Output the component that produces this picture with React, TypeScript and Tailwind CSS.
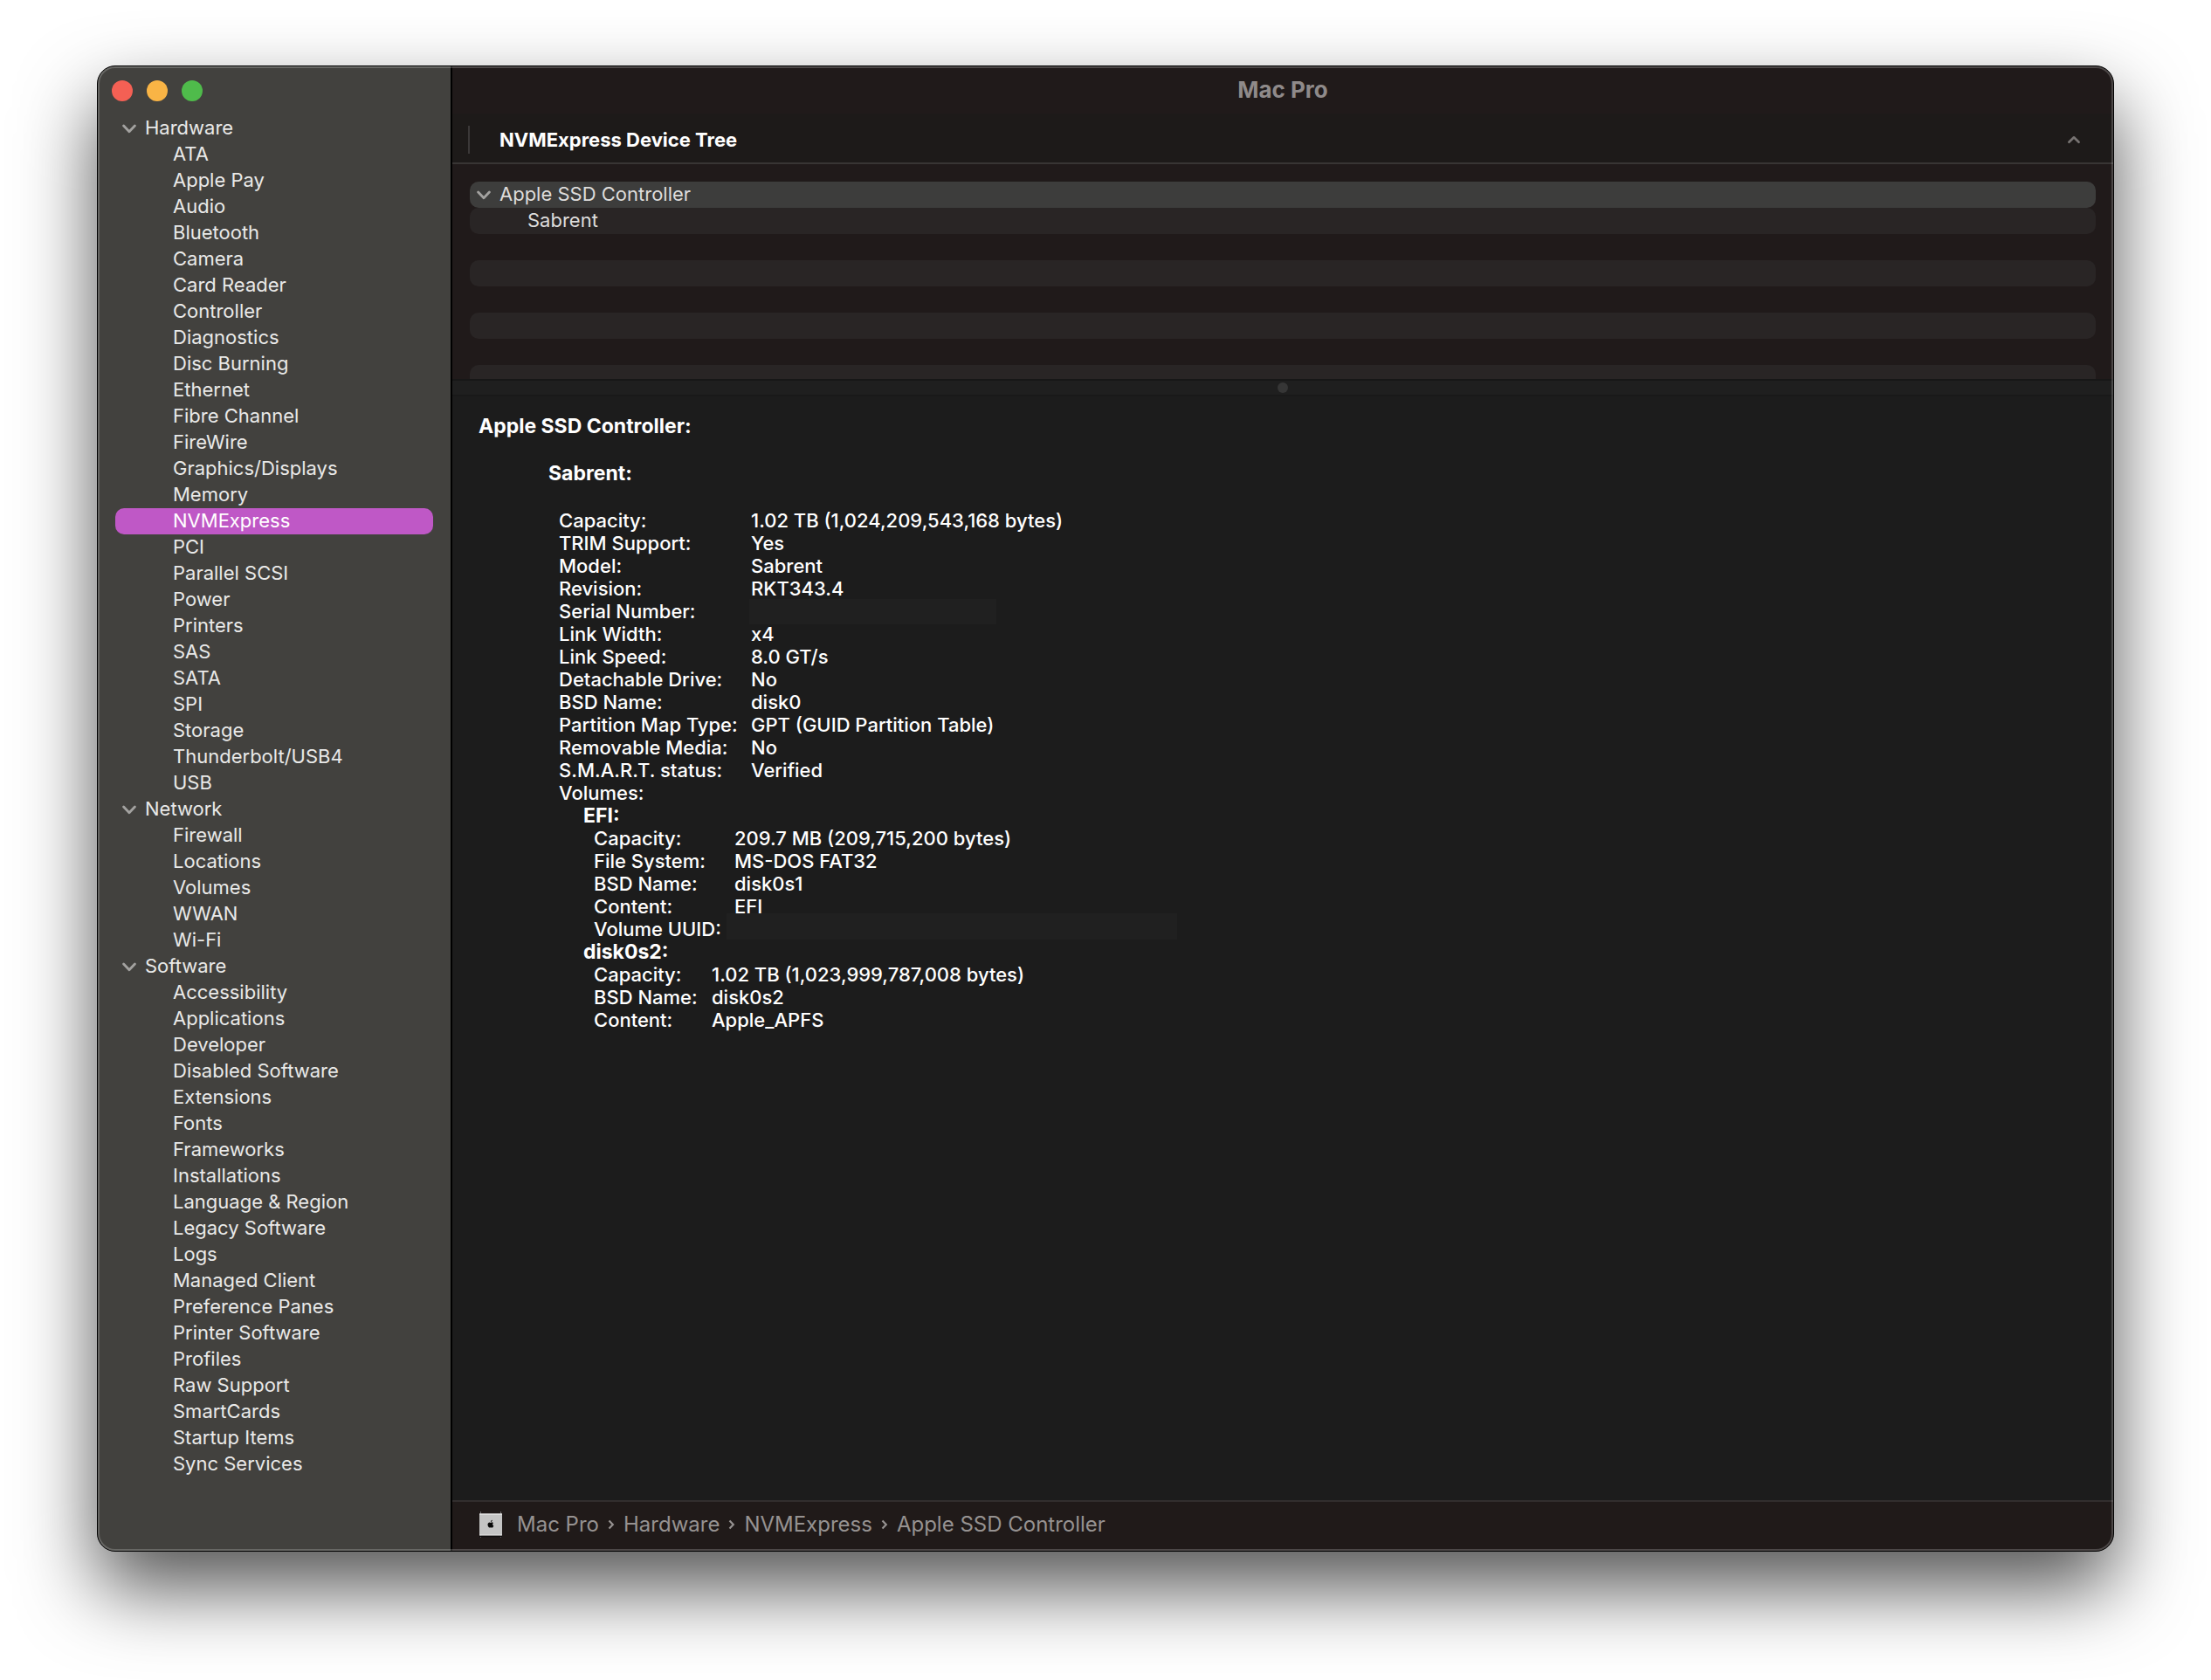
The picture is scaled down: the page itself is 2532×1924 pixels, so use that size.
import { useState } from "react";

type Group = { name: string; items: string[] };
type Field = { label: string; value?: string; mask?: string };

const groups: Group[] = [
  {
    name: "Hardware",
    items: [
      "ATA", "Apple Pay", "Audio", "Bluetooth", "Camera", "Card Reader", "Controller",
      "Diagnostics", "Disc Burning", "Ethernet", "Fibre Channel", "FireWire",
      "Graphics/Displays", "Memory", "NVMExpress", "PCI", "Parallel SCSI", "Power",
      "Printers", "SAS", "SATA", "SPI", "Storage", "Thunderbolt/USB4", "USB",
    ],
  },
  { name: "Network", items: ["Firewall", "Locations", "Volumes", "WWAN", "Wi-Fi"] },
  {
    name: "Software",
    items: [
      "Accessibility", "Applications", "Developer", "Disabled Software", "Extensions",
      "Fonts", "Frameworks", "Installations", "Language & Region", "Legacy Software",
      "Logs", "Managed Client", "Preference Panes", "Printer Software", "Profiles",
      "Raw Support", "SmartCards", "Startup Items", "Sync Services",
    ],
  },
];

const driveFields: Field[] = [
  { label: "Capacity:", value: "1.02 TB (1,024,209,543,168 bytes)" },
  { label: "TRIM Support:", value: "Yes" },
  { label: "Model:", value: "Sabrent" },
  { label: "Revision:", value: "RKT343.4" },
  { label: "Serial Number:", mask: "-left-0.5 -top-px h-[29px] w-[283px]" },
  { label: "Link Width:", value: "x4" },
  { label: "Link Speed:", value: "8.0 GT/s" },
  { label: "Detachable Drive:", value: "No" },
  { label: "BSD Name:", value: "disk0" },
  { label: "Partition Map Type:", value: "GPT (GUID Partition Table)" },
  { label: "Removable Media:", value: "No" },
  { label: "S.M.A.R.T. status:", value: "Verified" },
  { label: "Volumes:" },
];

const efiFields: Field[] = [
  { label: "Capacity:", value: "209.7 MB (209,715,200 bytes)" },
  { label: "File System:", value: "MS-DOS FAT32" },
  { label: "BSD Name:", value: "disk0s1" },
  { label: "Content:", value: "EFI" },
  { label: "Volume UUID:", mask: "-left-[9px] -top-[5px] h-[30px] w-[516px]" },
];

const diskFields: Field[] = [
  { label: "Capacity:", value: "1.02 TB (1,023,999,787,008 bytes)" },
  { label: "BSD Name:", value: "disk0s2" },
  { label: "Content:", value: "Apple_APFS" },
];

const crumbs = ["Mac Pro", "Hardware", "NVMExpress", "Apple SSD Controller"];

function Chevron() {
  return (
    <svg className="h-3 w-4 shrink-0" viewBox="0 0 16 12" fill="none" stroke="#a3a2a0" strokeWidth="2.8" strokeLinecap="round" strokeLinejoin="round" aria-hidden="true">
      <path d="M1.600 3 8 9.800l6.400-6.800" />
    </svg>
  );
}

function Fields({ rows, column }: { rows: Field[]; column: string }) {
  return (
    <table className="border-collapse font-medium whitespace-nowrap">
      <tbody>
        {rows.map((row) => (
          <tr key={row.label} className="h-[26px]">
            <th scope="row" className={`${column} p-0 text-left font-medium`}>{row.label}</th>
            <td className="relative p-0">
              {row.value}
              {row.mask && <span className={`absolute bg-[#202020] ${row.mask}`} />}
            </td>
          </tr>
        ))}
      </tbody>
    </table>
  );
}

function Sidebar() {
  const [selected, setSelected] = useState("NVMExpress");
  const [closed, setClosed] = useState<string[]>([]);
  const toggle = (name: string) =>
    setClosed(closed.includes(name) ? closed.filter((n) => n !== name) : [...closed, name]);

  return (
    <aside className="w-[406px] shrink-0 border-r-2 border-black bg-[#42413e]">
      <div className="flex h-14 items-start gap-4 pt-4 pl-4">
        <button aria-label="Close" className="size-6 rounded-full bg-[#f46054]" />
        <button aria-label="Minimize" className="size-6 rounded-full bg-[#f9b445]" />
        <button aria-label="Zoom" className="size-6 rounded-full bg-[#4fbb4b]" />
      </div>
      <nav className="px-5 text-[#e9e9e8]">
        {groups.map((group) => (
          <section key={group.name}>
            <button
              onClick={() => toggle(group.name)}
              aria-expanded={!closed.includes(group.name)}
              className="flex h-[30px] w-full items-center gap-2.5 pl-2"
            >
              <Chevron />
              <span className="pb-0.5">{group.name}</span>
            </button>
            {!closed.includes(group.name) && (
              <ul>
                {group.items.map((item) => (
                  <li key={item}>
                    <button
                      onClick={() => setSelected(item)}
                      className={`flex h-[30px] w-full items-center rounded-[10px] pb-0.5 pl-[66px] ${selected === item ? "bg-[#bf58c6] text-white" : ""}`}
                    >
                      {item}
                    </button>
                  </li>
                ))}
              </ul>
            )}
          </section>
        ))}
      </nav>
    </aside>
  );
}

function DeviceTree() {
  return (
    <section className="shrink-0">
      <div className="flex h-[58px] items-center border-b-2 border-[#383534] bg-[#1d1a19] pt-1 pr-[37px] pl-[18px]">
        <span className="h-8 w-0.5 bg-[#3b3838]" />
        <button className="flex flex-1 items-center justify-between pl-[34px] font-bold text-white">
          NVMExpress Device Tree
          <svg className="h-[10px] w-4" viewBox="0 0 16 10" fill="none" stroke="#777372" strokeWidth="2.600" strokeLinecap="round" strokeLinejoin="round" aria-hidden="true">
            <path d="M2.400 7.800 8 2.300l5.600 5.500" />
          </svg>
        </button>
      </div>
      <div role="tree" aria-label="NVMExpress Device Tree" className="h-[246px] overflow-hidden px-5 pt-5 text-[#dddcdb]">
        <button role="treeitem" aria-expanded="true" className="flex h-[30px] w-full items-center gap-2.5 rounded-[10px] bg-[#3d3d3c] pl-2">
          <Chevron />
          <span className="pb-0.5">Apple SSD Controller</span>
        </button>
        <button role="treeitem" className="flex h-[30px] w-full items-center rounded-[10px] bg-[#292525] pb-0.5 pl-[66px]">
          Sabrent
        </button>
        <div className="mt-[30px] h-[30px] rounded-[10px] bg-[#292525]" />
        <div className="mt-[30px] h-[30px] rounded-[10px] bg-[#292525]" />
        <div className="mt-[30px] h-[30px] rounded-[10px] bg-[#292525]" />
      </div>
    </section>
  );
}

function MacProIcon() {
  return (
    <svg className="h-8 w-[26px] shrink-0" viewBox="0 0 26 32" aria-hidden="true">
      <path d="M1.500 1v30M24.500 1v30" stroke="#6b6969" strokeWidth="1" />
      <rect x="0" y="3.500" width="26" height="25" fill="#c4c4c4" />
      <path d="M0 4.200h26M0 28h26" stroke="#e6e6e6" strokeWidth="1.200" />
      <path d="M0 29.500h26" stroke="#0b0b0b" strokeWidth="1.400" />
      <path d="M13 13.900c.6-.4 1.100-.6 1.700-.5.6.1 1 .3 1.300.7-1.300 1-1 2.700.3 3.300-.4 1.200-1.100 2.100-1.800 2.100-.6 0-.8-.3-1.500-.3s-.9.3-1.500.3c-1-.1-2.100-2-2-3.700.1-1.500 1-2.400 2.100-2.400.6 0 1 .3 1.400.5Zm-.1-.8c0-1.200.8-2.200 1.900-2.300.1 1.200-.8 2.200-1.900 2.300Z" fill="#080808" />
    </svg>
  );
}

function PathBar() {
  return (
    <footer className="flex h-[58px] shrink-0 items-center border-t-2 border-[#322e2e] bg-[#201a19] pb-1 pl-[31px] text-2xl text-[#969291]">
      <MacProIcon />
      <ol className="flex items-center pl-[17px]">
        {crumbs.map((crumb, i) => (
          <li key={crumb} className="flex items-center">
            {i > 0 && (
              <svg className="mx-2.5 h-3 w-2" viewBox="0 0 8 12" fill="none" stroke="#969291" strokeWidth="2.200" aria-hidden="true">
                <path d="M1.500 1.500 5.800 6l-4.300 4.500" />
              </svg>
            )}
            <button>{crumb}</button>
          </li>
        ))}
      </ol>
    </footer>
  );
}

export default function App() {
  return (
    <div className="flex min-h-screen bg-white px-[111px] pt-[75px] pb-[147px] font-[Inter,sans-serif] text-[22px] leading-[26px]">
      <main className="relative flex min-w-0 flex-1 overflow-hidden rounded-[21px] border border-black bg-[#1c1c1c] shadow-[0_42px_88px_rgba(0,0,0,0.67)]">
        <Sidebar />
        <div className="flex min-w-0 flex-1 flex-col bg-[#201a1a]">
          <header className="flex h-[54px] shrink-0 items-center justify-center">
            <h1 className="text-[26px] font-bold text-[#8f8a8a]">Mac Pro</h1>
          </header>
          <DeviceTree />
          <div role="separator" aria-label="Resize panes" className="flex h-5 shrink-0 items-center justify-center border-t-2 border-b-2 border-t-[#171717] border-b-[#191919] bg-[#1f1f1f]">
            <span className="size-3 rounded-full bg-[#363636]" />
          </div>
          <section className="flex-1 bg-[#1c1c1c] pt-[21px] pl-[30px] text-white">
            <h2 className="text-[23px] leading-[26px] font-bold">Apple SSD Controller:</h2>
            <h3 className="mt-7 mb-7 pl-20 text-[23px] leading-[26px] font-bold">Sabrent:</h3>
            <div className="pl-[92px]">
              <Fields rows={driveFields} column="w-[220px]" />
              <h4 className="pl-7 text-[23px] leading-[26px] font-bold">EFI:</h4>
              <div className="pl-10">
                <Fields rows={efiFields} column="w-[161px]" />
              </div>
              <h4 className="pl-7 text-[23px] leading-[26px] font-bold">disk0s2:</h4>
              <div className="pl-10">
                <Fields rows={diskFields} column="w-[135px]" />
              </div>
            </div>
          </section>
          <PathBar />
        </div>
        <div className="pointer-events-none absolute inset-0 rounded-[20px] border-2 border-white/20" />
      </main>
    </div>
  );
}
